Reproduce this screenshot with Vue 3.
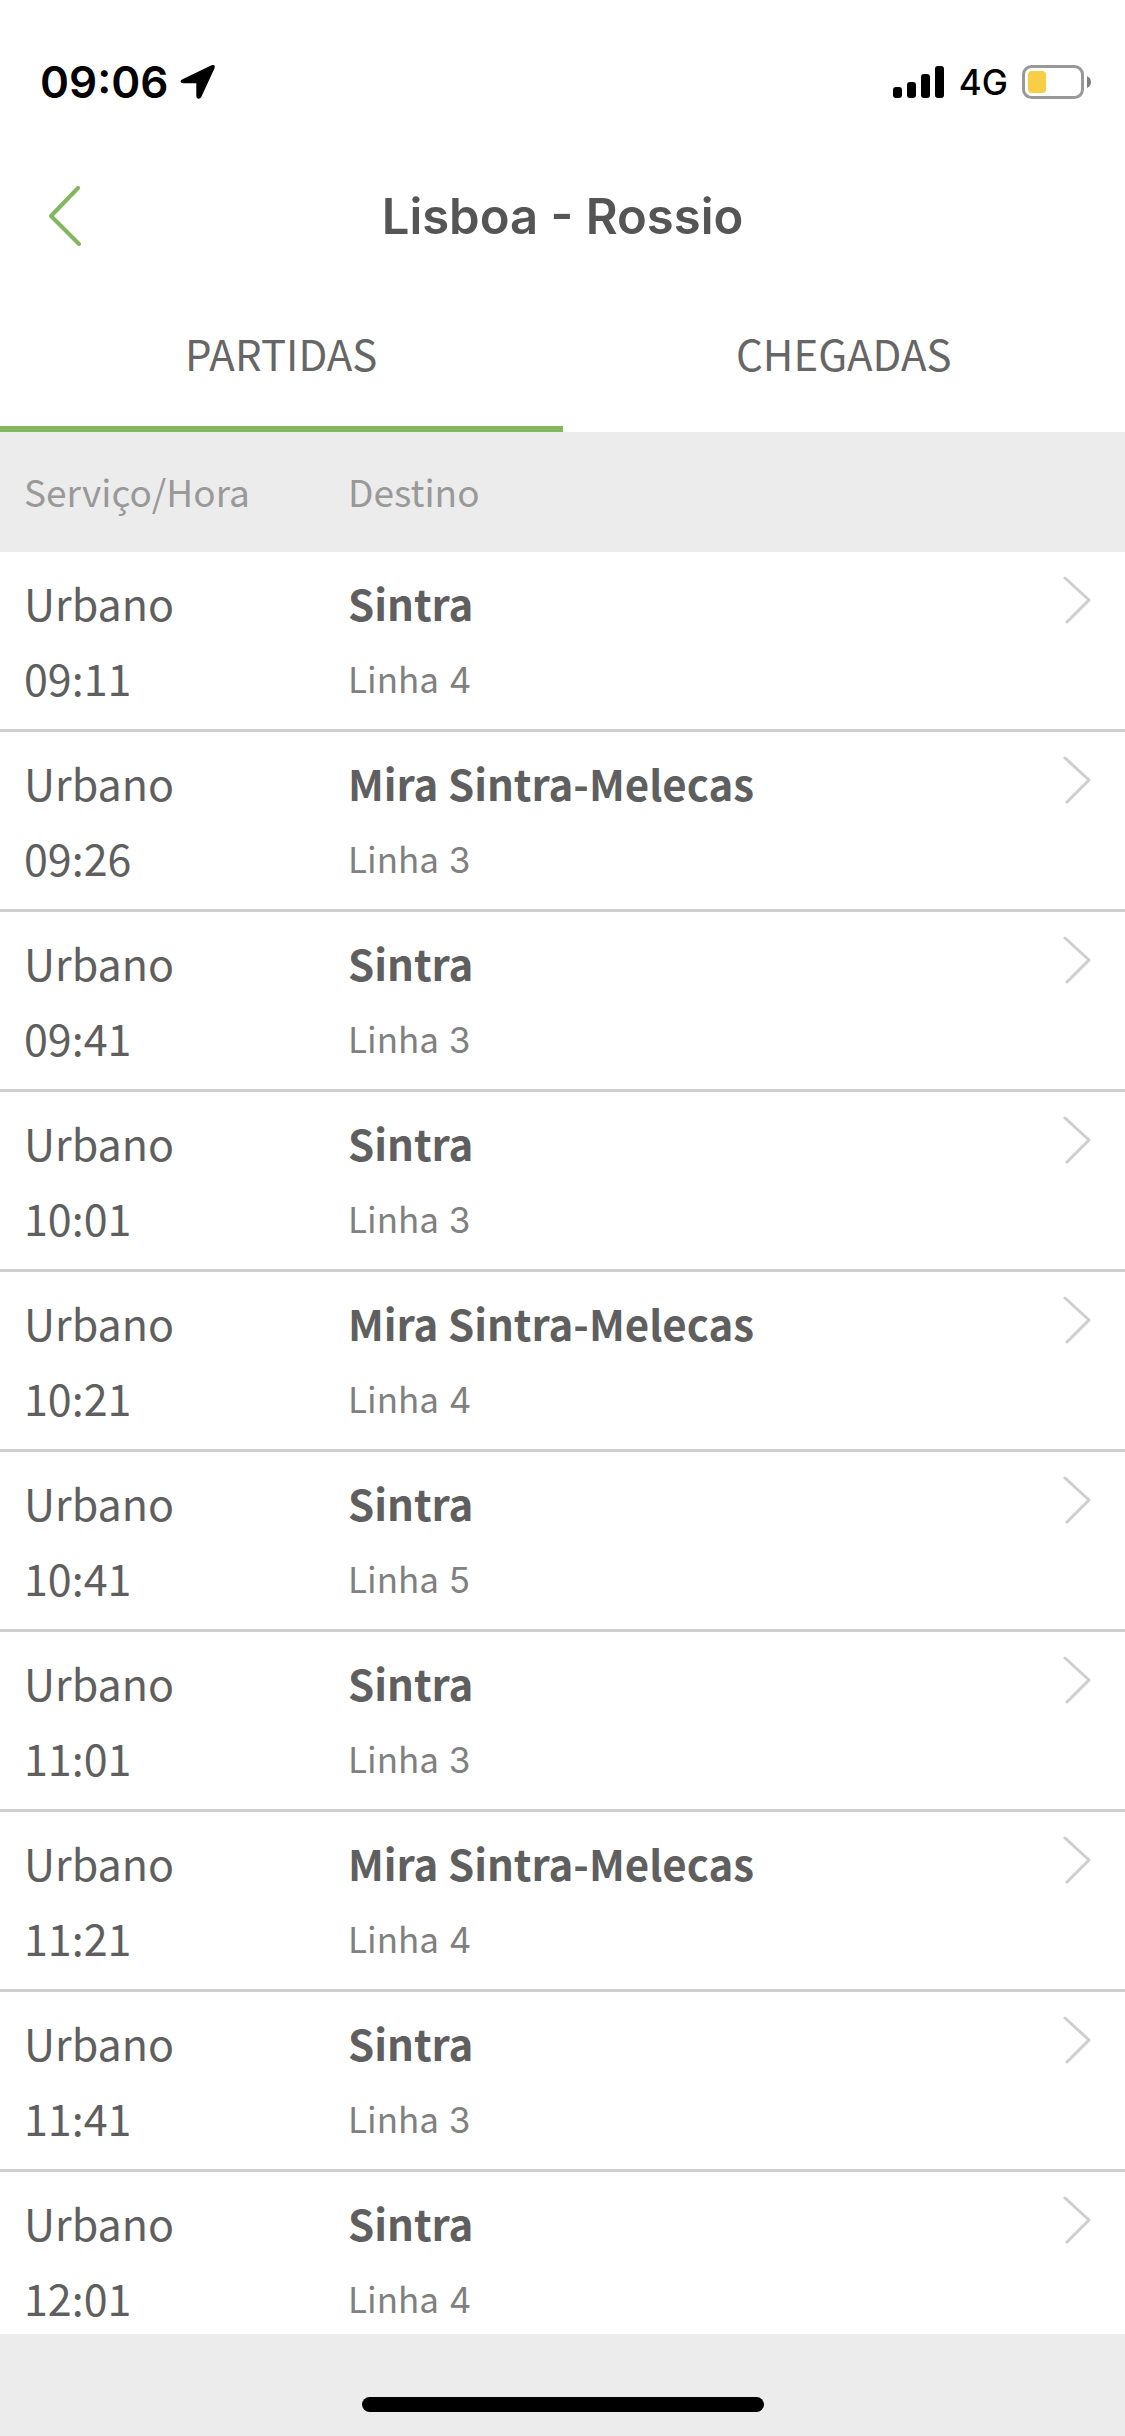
<script setup>
import { ref } from 'vue'

const tabs = ['PARTIDAS', 'CHEGADAS']
const activeTab = ref('PARTIDAS')

const departures = [
  { service: 'Urbano', time: '09:11', destination: 'Sintra', line: 4 },
  { service: 'Urbano', time: '09:26', destination: 'Mira Sintra-Melecas', line: 3 },
  { service: 'Urbano', time: '09:41', destination: 'Sintra', line: 3 },
  { service: 'Urbano', time: '10:01', destination: 'Sintra', line: 3 },
  { service: 'Urbano', time: '10:21', destination: 'Mira Sintra-Melecas', line: 4 },
  { service: 'Urbano', time: '10:41', destination: 'Sintra', line: 5 },
  { service: 'Urbano', time: '11:01', destination: 'Sintra', line: 3 },
  { service: 'Urbano', time: '11:21', destination: 'Mira Sintra-Melecas', line: 4 },
  { service: 'Urbano', time: '11:41', destination: 'Sintra', line: 3 },
  { service: 'Urbano', time: '12:01', destination: 'Sintra', line: 4 }
]
</script>

<template>
  <div class="screen">
    <div class="status">
      <div class="status-left">
        <span class="clock">09:06</span>
        <svg class="location" width="36" height="36" viewBox="0 0 36 36" aria-hidden="true">
          <path d="M2.500 15.200 L31.500 1.300 Q35.800 0 34.500 4.300 L21.300 33 Q20 35.300 18 34.700 Q16.300 34 16.300 32 V19.300 H3 Q.700 19.200 .500 17.300 Q.500 16 2.500 15.200 Z" fill="#000" />
        </svg>
      </div>
      <div class="status-right">
        <svg width="52" height="34" viewBox="0 0 52 34" aria-hidden="true">
          <rect x="0" y="22" width="9" height="11" rx="3" />
          <rect x="14" y="17" width="9" height="16" rx="3" />
          <rect x="28" y="9" width="9" height="24" rx="3" />
          <rect x="42" y="1" width="9" height="32" rx="3" />
        </svg>
        <span class="network">4G</span>
        <svg width="70" height="34" viewBox="0 0 70 34" aria-hidden="true">
          <rect x="1.500" y="1.500" width="59" height="31" rx="8" fill="none" stroke="#999" stroke-width="3" />
          <rect x="6" y="6" width="18" height="22" rx="4" fill="#f7ce46" />
          <path d="M65 11 Q69 13 69 17 Q69 21 65 23 Z" fill="#808080" />
        </svg>
      </div>
    </div>

    <header class="navbar">
      <button class="back" type="button" aria-label="Voltar">
        <svg width="34" height="60" viewBox="0 0 34 60" fill="none" stroke="#84b55f" stroke-width="4" stroke-linecap="round" stroke-linejoin="round" aria-hidden="true">
          <path d="M30 2 L3 30 L31 58" />
        </svg>
      </button>
      <h1>Lisboa - Rossio</h1>
    </header>

    <nav class="tabs">
      <button
        v-for="tab in tabs"
        :key="tab"
        type="button"
        class="tab"
        :class="{ active: tab === activeTab }"
        @click="activeTab = tab"
      >{{ tab }}</button>
    </nav>

    <main class="board">
      <table>
        <thead>
          <tr>
            <th class="col-service" scope="col">Serviço/Hora</th>
            <th scope="col">Destino</th>
            <td class="col-more"></td>
          </tr>
        </thead>
        <tbody>
          <tr v-for="train in departures" :key="train.time">
            <td class="col-service">
              <div>{{ train.service }}</div>
              <div>{{ train.time }}</div>
            </td>
            <td>
              <div class="destination">{{ train.destination }}</div>
              <div class="line">Linha<span class="line-number">&nbsp;{{ train.line }}</span></div>
            </td>
            <td class="col-more">
              <a href="#" class="more" :aria-label="train.destination + ' ' + train.time">
                <svg width="28" height="48" viewBox="0 0 28 48" fill="none" stroke="#cecece" stroke-width="3" stroke-linecap="round" stroke-linejoin="round" aria-hidden="true">
                  <path d="M2 2 L26 24 L4 46" />
                </svg>
              </a>
            </td>
          </tr>
        </tbody>
      </table>
    </main>

    <footer class="home">
      <div class="indicator"></div>
    </footer>
  </div>
</template>

<style>
body {
  margin: 0;
}
</style>

<style scoped>
.screen {
  display: flex;
  flex-direction: column;
  height: 100vh;
  background: #fff;
  color: #5f5f5f;
  font-family: "Noto Sans CJK SC", "Noto Sans", sans-serif;
  font-size: 43px;
}

.status {
  display: flex;
  flex-shrink: 0;
  align-items: center;
  justify-content: space-between;
  height: 164px;
  padding: 0 33px 0 40px;
  color: #000;
  font-family: Inter, "Liberation Sans", sans-serif;
}

.status-left {
  display: flex;
  align-items: center;
  gap: 12px;
}

.clock {
  font-size: 44px;
  font-weight: 600;
}

.status-right {
  display: flex;
  align-items: center;
  gap: 14px;
}

.network {
  font-size: 35px;
  font-weight: 500;
}

svg {
  display: block;
}

.navbar {
  display: grid;
  flex-shrink: 0;
  grid-template-columns: 130px 1fr 130px;
  align-items: center;
  height: 104px;
}

.back {
  justify-self: start;
  padding: 0 0 0 48px;
  border: 0;
  background: none;
}

h1 {
  margin: 0;
  color: #555;
  font-family: Inter, "Liberation Sans", sans-serif;
  font-size: 49px;
  font-weight: 600;
  text-align: center;
}

.tabs {
  display: flex;
  flex-shrink: 0;
}

.tab {
  flex: 1;
  height: 164px;
  padding: 10px 0 0;
  border: 0;
  border-bottom: 6px solid transparent;
  background: none;
  color: #666;
  font: inherit;
  font-size: 42px;
}

.tab.active {
  border-bottom-color: #84b55f;
}

.board {
  flex: 1;
  min-height: 0;
  overflow: hidden;
}

table {
  width: 100%;
  border-spacing: 0;
  table-layout: fixed;
}

th,
td {
  box-sizing: border-box;
  padding: 0;
  text-align: left;
  vertical-align: top;
}

thead th,
thead td {
  height: 120px;
  padding-bottom: 2px;
  background: #ececec;
  color: #999;
  font-size: 37px;
  font-weight: 400;
  vertical-align: middle;
}

tbody td {
  height: 180px;
  padding-top: 13px;
  border-bottom: 3px solid #cecece;
  line-height: 75px;
}

.col-service {
  width: 348px;
  padding-left: 24px;
}

.col-more {
  width: 62px;
}

.destination {
  font-size: 42px;
  font-weight: 700;
  white-space: nowrap;
}

.line {
  color: #808080;
  font-size: 35px;
}

.line-number {
  font-family: Inter, "Liberation Sans", sans-serif;
}

.more {
  display: block;
  padding-top: 11px;
}

.home {
  display: flex;
  flex-shrink: 0;
  align-items: flex-end;
  justify-content: center;
  box-sizing: border-box;
  height: 102px;
  padding-bottom: 24px;
  background: #ececec;
}

.indicator {
  width: 402px;
  height: 15px;
  border-radius: 8px;
  background: #000;
}
</style>
